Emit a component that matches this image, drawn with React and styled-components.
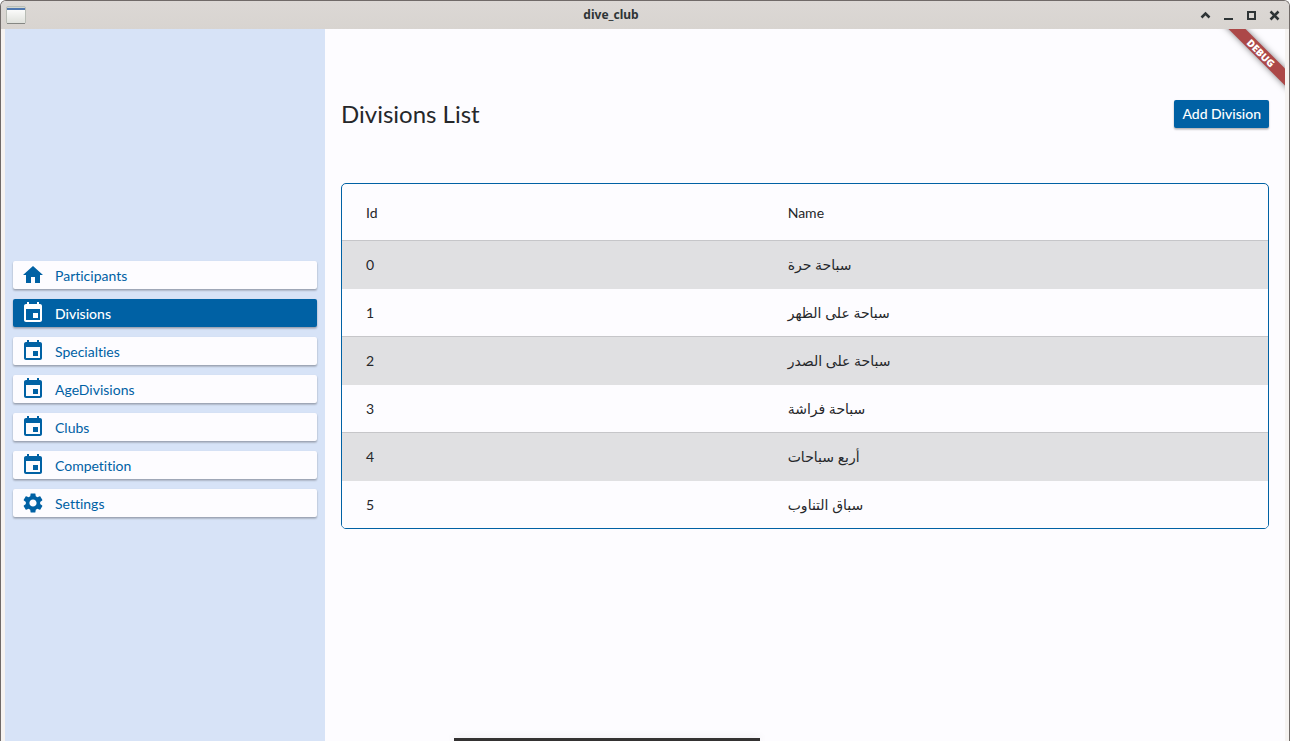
import React from "react";
import styled, { createGlobalStyle } from "styled-components";

const GlobalStyle = createGlobalStyle`
  *, *::before, *::after { box-sizing: border-box; }
  body { margin: 0; background: #fff; overflow: hidden; }
  button { font: inherit; border: 0; cursor: pointer; }
`;

const blue = "#0061a4";
const raised = "0 1px 2px rgba(0, 0, 0, 0.2), 0 2px 2px rgba(0, 0, 0, 0.14)";

const WindowFrame = styled.div`
  position: relative;
  display: flex;
  flex-direction: column;
  height: 100vh;
  overflow: hidden;
  border: 1px solid #706a68;
  border-bottom: 0;
  border-radius: 6px 6px 0 0;
  background: #f6f3f1;
  color: #25272a;
  font-family: Lato, "Noto Sans", "DejaVu Sans", sans-serif;
  font-size: 14px;
  font-variant-ligatures: no-common-ligatures;
  line-height: 20px;
`;

const TitleBar = styled.header`
  display: flex;
  align-items: center;
  flex: none;
  height: 28px;
  padding: 0 5px 0 4px;
  background: linear-gradient(#dcd8d5, #d8d4d0);
`;

const WindowTitle = styled.h1`
  flex: 1;
  margin: 0;
  color: #2e3436;
  font-family: "Noto Sans", sans-serif;
  font-size: 12px;
  font-weight: 700;
  line-height: 18px;
  text-align: center;
`;

const WindowControls = styled.div`
  display: flex;
  gap: 3px;
`;

const WindowButton = styled.button`
  display: grid;
  width: 20px;
  height: 20px;
  padding: 0;
  place-items: center;
  background: none;
  color: #2e3436;
`;

const AppBody = styled.div`
  position: relative;
  display: flex;
  flex: 1;
  min-height: 0;
  margin: 0 4px;
  overflow: hidden;
  background: #fdfcff;
`;

const Sidebar = styled.nav`
  display: flex;
  flex: none;
  flex-direction: column;
  justify-content: center;
  gap: 10px;
  width: 320px;
  padding: 8px 8px 0;
  background: #d7e3f7;
`;

const NavButton = styled.button`
  display: flex;
  align-items: center;
  gap: 10px;
  height: 28px;
  padding: 0 8px;
  border-radius: 2px;
  background: ${(p) => (p.$active ? blue : "#fdfcff")};
  color: ${(p) => (p.$active ? "#fff" : blue)};
  font-weight: ${(p) => (p.$active ? 500 : 400)};
  box-shadow: ${raised};
`;

const NavLabel = styled.span`
  padding-top: 2px;
`;

const Content = styled.main`
  flex: 1;
  min-width: 0;
  padding: 70px 16px 0;
`;

const PageHeader = styled.div`
  display: flex;
  align-items: center;
  justify-content: space-between;
  margin-bottom: 54px;
`;

const PageTitle = styled.h2`
  margin: 0;
  font-size: 24px;
  font-weight: 400;
  line-height: 30px;
`;

const AddButton = styled.button`
  height: 28px;
  padding: 0 8px;
  border-radius: 2px;
  background: ${blue};
  color: #fff;
  font-weight: 500;
  box-shadow: ${raised};
`;

const TableFrame = styled.div`
  overflow: hidden;
  border: 1px solid ${blue};
  border-radius: 5px;
`;

const Table = styled.table`
  width: 100%;
  border-collapse: separate;
  border-spacing: 0;
  table-layout: fixed;
`;

const HeadCell = styled.th`
  width: ${(p) => p.$width};
  height: 56px;
  padding: 2px 29px 0;
  font-weight: 400;
  text-align: left;

  &:first-child { padding-left: 24px; }
`;

const Row = styled.tr`
  background: ${(p) => (p.$striped ? "#e0e0e2" : "#fdfcff")};

  td { border-top: 1px solid ${(p) => (p.$striped ? "#c6c6c9" : "#e0e0e2")}; }
`;

const Cell = styled.td`
  height: 48px;
  padding: 0 29px;

  &:first-child { padding-left: 24px; }
`;

const ArabicText = styled.bdi`
  font-family: "Noto Sans", "DejaVu Sans", sans-serif;
`;

const DebugCorner = styled.div`
  position: absolute;
  top: 0;
  right: 0;
  width: 80px;
  height: 80px;
  overflow: hidden;
  pointer-events: none;
`;

const DebugRibbon = styled.div`
  position: absolute;
  top: 18px;
  right: -24px;
  width: 96px;
  height: 12px;
  transform: rotate(45deg);
  background: #ac4848;
  box-shadow: 0 0 6px rgba(0, 0, 0, 0.5);
  color: #fff;
  font-family: "Noto Sans", sans-serif;
  font-size: 10px;
  font-weight: 900;
  line-height: 12px;
  text-align: center;
`;

const BottomPanel = styled.div`
  position: absolute;
  bottom: 0;
  left: 453px;
  width: 306px;
  height: 3px;
  background: #343232;
  box-shadow: 0 0 10px rgba(0, 0, 0, 0.12);
`;

const AppIcon = () => (
  <svg width="22" height="20" viewBox="0 0 22 20" aria-hidden="true">
    <defs>
      <linearGradient id="pane" x1="0" y1="0" x2="0" y2="1">
        <stop offset="0" stopColor="#fff" />
        <stop offset="1" stopColor="#dfe1dc" />
      </linearGradient>
    </defs>
    <rect x="1.5" y="1.5" width="19" height="17" rx="1.5" fill="#d3d7cf" stroke="#b9bdb6" />
    <path d="M2 18.5h18" stroke="#858783" />
    <rect x="2" y="3" width="18" height="15" fill="url(#pane)" />
    <path d="M2 4h18" stroke="#5078b0" strokeWidth="2" />
  </svg>
);

const controls = {
  Shade: <path d="M1.5 7.5l4-4 4 4" strokeWidth="2.5" />,
  Minimize: <path d="M1 9h9" />,
  Maximize: <path d="M2 2h7v7H2z" />,
  Close: <path d="m1.5 1.5 8 8m0-8-8 8" strokeWidth="2.5" />,
};

const icons = {
  home: "M10 20v-6h4v6h5v-8h3L12 3 2 12h3v8z",
  event: "M17 12h-5v5h5v-5zM16 1v2H8V1H6v2H5c-1.11 0-1.99.9-1.99 2L3 19c0 1.1.89 2 2 2h14c1.1 0 2-.9 2-2V5c0-1.1-.9-2-2-2h-1V1h-2zm3 18H5V8h14v11z",
  settings:
    "M19.14 12.94c.04-.3.06-.61.06-.94 0-.32-.02-.64-.07-.94l2.03-1.58c.18-.14.23-.41.12-.61l-1.92-3.32c-.12-.22-.37-.29-.59-.22l-2.39.96c-.5-.38-1.03-.7-1.62-.94l-.36-2.54c-.04-.24-.24-.41-.48-.41h-3.84c-.24 0-.43.17-.47.41l-.36 2.54c-.59.24-1.13.57-1.62.94l-2.39-.96c-.22-.08-.47 0-.59.22L2.74 8.87c-.12.21-.08.47.12.61l2.03 1.58c-.05.3-.09.63-.09.94s.02.64.07.94l-2.03 1.58c-.18.14-.23.41-.12.61l1.92 3.32c.12.22.37.29.59.22l2.39-.96c.5.38 1.03.7 1.62.94l.36 2.54c.05.24.24.41.48.41h3.84c.24 0 .44-.17.47-.41l.36-2.54c.59-.24 1.13-.56 1.62-.94l2.39.96c.22.08.47 0 .59-.22l1.92-3.32c.12-.22.07-.47-.12-.61l-2.01-1.58zM12 15.6c-1.98 0-3.6-1.62-3.6-3.6s1.62-3.6 3.6-3.6 3.6 1.62 3.6 3.6-1.62 3.6-3.6 3.6z",
};

const navItems = [
  ["Participants", "home"],
  ["Divisions", "event"],
  ["Specialties", "event"],
  ["AgeDivisions", "event"],
  ["Clubs", "event"],
  ["Competition", "event"],
  ["Settings", "settings"],
];

const divisions = [
  "سباحة حرة",
  "سباحة على الظهر",
  "سباحة على الصدر",
  "سباحة فراشة",
  "أربع سباحات",
  "سباق التناوب",
];

export default function App() {
  return (
    <>
      <GlobalStyle />
      <WindowFrame>
        <TitleBar>
          <AppIcon />
          <WindowTitle>dive_club</WindowTitle>
          <WindowControls>
            {Object.entries(controls).map(([name, shape]) => (
              <WindowButton key={name} aria-label={name}>
                <svg width="11" height="11" viewBox="0 0 11 11" fill="none" stroke="currentColor" strokeWidth="2">
                  {shape}
                </svg>
              </WindowButton>
            ))}
          </WindowControls>
        </TitleBar>
        <AppBody>
          <Sidebar>
            {navItems.map(([label, icon]) => (
              <NavButton key={label} $active={label === "Divisions"}>
                <svg width="24" height="24" viewBox="0 0 24 24" fill="currentColor" aria-hidden="true">
                  <path d={icons[icon]} />
                </svg>
                <NavLabel>{label}</NavLabel>
              </NavButton>
            ))}
          </Sidebar>
          <Content>
            <PageHeader>
              <PageTitle>Divisions List</PageTitle>
              <AddButton>Add Division</AddButton>
            </PageHeader>
            <TableFrame>
              <Table>
                <thead>
                  <tr>
                    <HeadCell $width="45%">Id</HeadCell>
                    <HeadCell>Name</HeadCell>
                  </tr>
                </thead>
                <tbody>
                  {divisions.map((name, id) => (
                    <Row key={id} $striped={id % 2 === 0}>
                      <Cell>{id}</Cell>
                      <Cell><ArabicText lang="ar">{name}</ArabicText></Cell>
                    </Row>
                  ))}
                </tbody>
              </Table>
            </TableFrame>
          </Content>
          <DebugCorner>
            <DebugRibbon>DEBUG</DebugRibbon>
          </DebugCorner>
        </AppBody>
        <BottomPanel />
      </WindowFrame>
    </>
  );
}
